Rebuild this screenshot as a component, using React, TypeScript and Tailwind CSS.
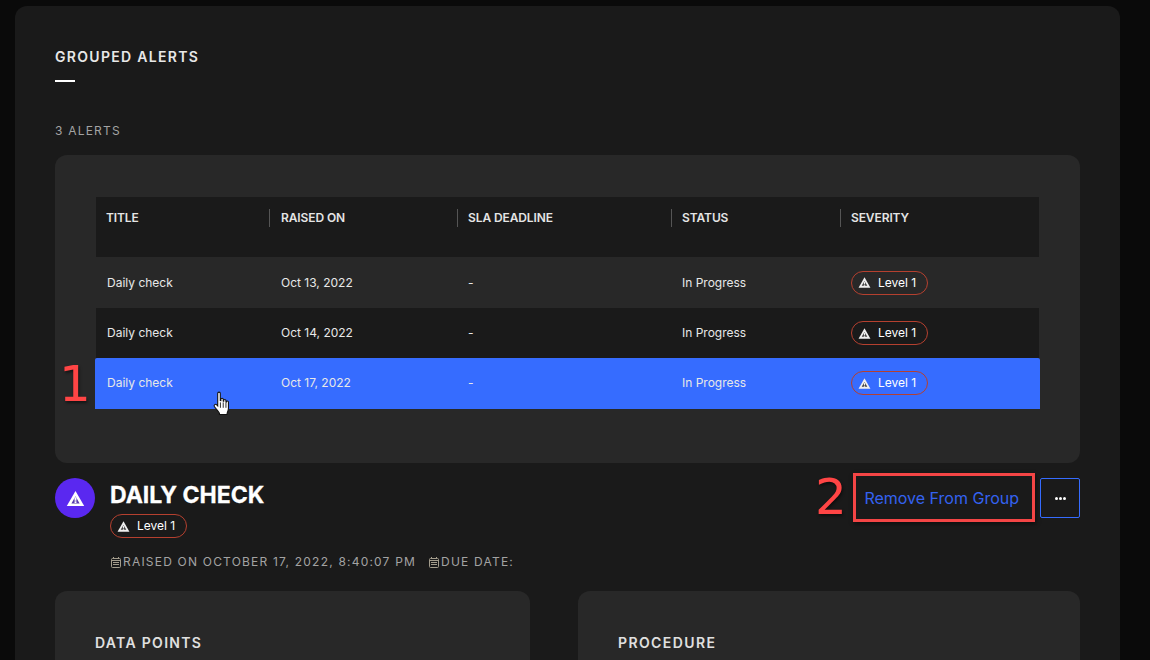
const COLS = ['w-[173px]', 'w-[188px]', 'w-[214px]', 'w-[169px]', 'flex-1'];
const HEADERS = ['TITLE', 'RAISED ON', 'SLA DEADLINE', 'STATUS', 'SEVERITY'];

const ROWS = [
    { date: 'Oct 13, 2022', className: 'h-[51px] bg-[#282828]' },
    { date: 'Oct 14, 2022', className: 'h-[50px] bg-[#1a1a1a]' },
    { date: 'Oct 17, 2022', className: '-mx-px h-[51px] rounded-t-[2px] bg-[#366cff] px-px pb-px' },
];

function WarnIcon({ className, inner = '#1a1a1a' }: { className?: string; inner?: string }) {
    return (
        <svg viewBox="0 0 24 24" className={className}>
            <path d="M12 2.500 1 21.500h22L12 2.500Z" fill="currentColor" />
            <path d="M12 9 6.800 18.200h10.400L12 9Z" fill={inner} fillOpacity="0.85" />
            <path d="M10.800 10.500h2.400v4.300h-2.400zM10.800 15.600h2.400v2.200h-2.400z" fill="currentColor" />
        </svg>
    );
}

function CalendarIcon() {
    return (
        <svg viewBox="0 0 10 11" className="h-[11px] w-[10px] text-[#a39c8c]" fill="none" stroke="currentColor" strokeWidth="1">
            <rect x="0.500" y="1.500" width="9" height="9" rx="1" />
            <path d="M0.500 3.500h9M2 5.500h6M2 7.500h6M2.500 0v1.500M7.500 0v1.500" />
        </svg>
    );
}

function LevelBadge() {
    return (
        <span className="inline-flex h-6 w-[77px] items-center gap-[7px] rounded-full border border-[#b5402f] pl-[6px] text-xs leading-none text-white">
            <WarnIcon className="h-[13px] w-[13px] text-[#f0f0f0]" />
            Level 1
        </span>
    );
}

function HandCursor() {
    return (
        <svg viewBox="0 0 18 24" className="absolute left-[211px] top-[391px] h-[26px] w-[21px]">
            <path
                d="M5.500 2.200c0-1.500 2.400-1.500 2.400 0v6.600l.5.100V7.700c0-1.300 2.200-1.300 2.200 0v1.700l.4.100V8.700c0-1.200 2.100-1.200 2.100 0v1.300l.4.100c0-1.100 1.900-1.100 1.900.1v5.800c0 2-.8 3-1.200 4.500v1.200H7.100v-1.200c-.9-1.700-3.500-4.300-4.700-6.200-.8-1.400 1-2.700 2.200-1.500l.9 1Z"
                fill="#ffffff"
                stroke="#111111"
                strokeWidth="1"
            />
            <path d="M8 10.500v5M10.600 10.500v5M13.100 10.500v5" stroke="#111111" strokeWidth="0.800" />
        </svg>
    );
}

export default function App() {
    return (
        <div className="relative h-[660px] w-[1150px] overflow-hidden bg-[#0a0a0a] pl-[15px] pr-[30px] pt-[6px] font-['Inter',sans-serif]">
            <div className="h-[700px] rounded-t-xl bg-[#1a1a1a] px-10 pt-[43px]">
                <h2 className="text-sm leading-4 font-semibold tracking-[1.3px] text-[#e8e8e8]">GROUPED ALERTS</h2>
                <div className="mt-[15px] h-0.5 w-5 bg-white" />
                <p className="mt-[41px] text-xs leading-4 tracking-[1.2px] text-[#a3a3a3]">3 ALERTS</p>

                <section className="mt-4 h-[308px] rounded-xl bg-[#282828] px-[41px] pt-[42px]">
                    <div className="flex h-[60px] bg-[#1a1a1a] pt-3 text-xs font-semibold tracking-[-0.1px] text-[#e5e5e5]">
                        {HEADERS.map((h, i) => (
                            <div key={h} className={`${COLS[i]} h-[18px] leading-[18px] ${i === 0 ? 'pl-[10px]' : ''}`}>
                                <span className={i === 0 ? '' : i === 1 ? 'block h-[18px] border-l border-[#555555] pl-[11px]' : 'block h-[18px] border-l border-[#555555] pl-[10px]'}>{h}</span>
                            </div>
                        ))}
                    </div>
                    {ROWS.map((row) => (
                        <div key={row.date} className={`flex items-center text-xs text-[#e8e8e8] ${row.className}`}>
                            <span className="w-[185px] pl-[11px]">Daily check</span>
                            <span className="w-[187px]">{row.date}</span>
                            <span className="w-[214px]">-</span>
                            <span className="w-[169px]">In Progress</span>
                            <LevelBadge />
                        </div>
                    ))}
                </section>

                <div className="mt-[15px] flex items-start justify-between">
                    <div className="flex gap-[15px]">
                        <div className="flex h-10 w-10 items-center justify-center rounded-full bg-[#5a28f0]">
                            <WarnIcon className="h-[19px] w-[19px] text-white" inner="#3a1aa0" />
                        </div>
                        <div>
                            <h1 className="text-[23px] leading-[34px] font-bold text-white [-webkit-text-stroke:0.3px_white]">DAILY CHECK</h1>
                            <div className="mt-[2px] flex">
                                <LevelBadge />
                            </div>
                            <div className="mt-4 flex items-center text-xs leading-4 tracking-[1.2px] text-[#a3a3a3]">
                                <span className="ml-px"><CalendarIcon /></span>
                                <span className="ml-[2px]">RAISED ON OCTOBER 17, 2022, 8:40:07 PM</span>
                                <span className="ml-[13px]"><CalendarIcon /></span>
                                <span className="ml-[2px]">DUE DATE:</span>
                            </div>
                        </div>
                    </div>
                    <div className="flex items-center gap-[21px]">
                        <button className="text-base leading-6 text-[#3462f0]">Remove From Group</button>
                        <button className="flex h-10 w-10 items-center justify-center rounded-[2px] border border-[#366cff]">
                            <span className="flex gap-px">
                                <i className="h-[3px] w-[3px] rounded-full bg-white" />
                                <i className="h-[3px] w-[3px] rounded-full bg-white" />
                                <i className="h-[3px] w-[3px] rounded-full bg-white" />
                            </span>
                        </button>
                    </div>
                </div>

                <div className="mt-[21px] flex gap-12">
                    <div className="h-[120px] w-[475px] rounded-xl bg-[#282828] px-10 pt-[43px]">
                        <h3 className="text-sm leading-[18px] font-semibold tracking-[1.3px] text-[#e0e0e0]">DATA POINTS</h3>
                    </div>
                    <div className="h-[120px] flex-1 rounded-xl bg-[#282828] px-10 pt-[43px]">
                        <h3 className="text-sm leading-[18px] font-semibold tracking-[1.4px] text-[#e0e0e0]">PROCEDURE</h3>
                    </div>
                </div>
            </div>

            {/* annotations on top of the screenshot */}
            <span className="absolute left-[59px] top-[356px] font-['DejaVu_Sans',sans-serif] text-[50px] leading-[56px] text-[#ff4545] [text-shadow:1px_2px_3px_rgba(0,0,0,0.5)]">1</span>
            <span className="absolute left-[815px] top-[469px] font-['DejaVu_Sans',sans-serif] text-[50px] leading-[56px] text-[#ff4545] [text-shadow:1px_2px_3px_rgba(0,0,0,0.5)]">2</span>
            <div className="absolute left-[853px] top-[473px] h-[49px] w-[182px] border-[3px] border-[#f44545] shadow-[1px_2px_4px_rgba(0,0,0,0.5)]" />
            <HandCursor />
        </div>
    );
}
